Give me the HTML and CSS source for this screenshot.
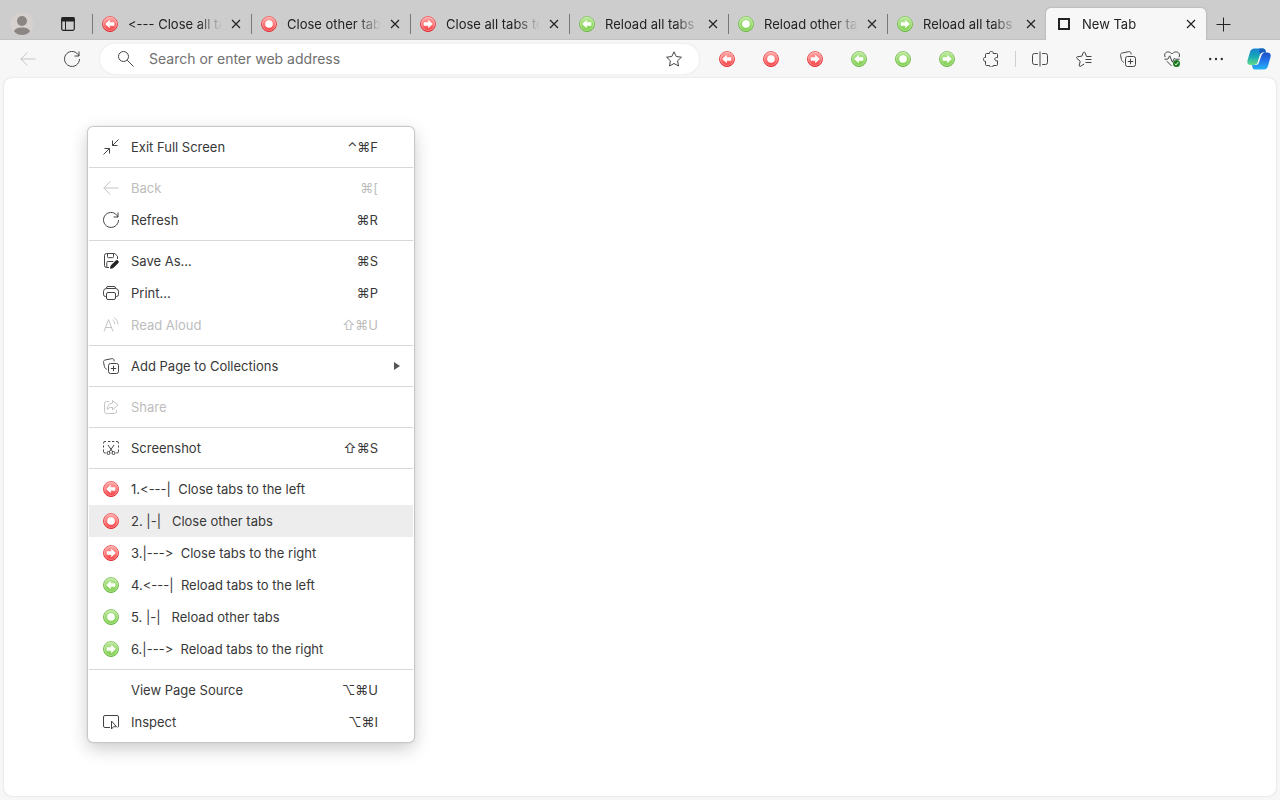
FILE: index.html
```html
<!DOCTYPE html>
<html lang="en">
<head>
<meta charset="utf-8">
<title>New Tab</title>
<link rel="stylesheet" href="styles.css">
</head>
<body>
<svg class="sprite" aria-hidden="true">
  <defs>
    <linearGradient id="red" x1="0" y1="0" x2="0" y2="1"><stop offset="0" stop-color="#ffaaaa"/><stop offset=".5" stop-color="#f77"/><stop offset="1" stop-color="#f43c42"/></linearGradient>
    <linearGradient id="redrim" x1="0" y1="0" x2="0" y2="1"><stop offset="0" stop-color="#ee6b6b"/><stop offset="1" stop-color="#dd2730"/></linearGradient>
    <linearGradient id="green" x1="0" y1="0" x2="0" y2="1"><stop offset="0" stop-color="#bdea9f"/><stop offset=".5" stop-color="#9ada70"/><stop offset="1" stop-color="#80d04e"/></linearGradient>
    <linearGradient id="greenrim" x1="0" y1="0" x2="0" y2="1"><stop offset="0" stop-color="#8fc96a"/><stop offset="1" stop-color="#63b53a"/></linearGradient>
    <linearGradient id="cpa" x1="0" y1="0" x2="0" y2="1"><stop offset="0" stop-color="#1682d4"/><stop offset=".5" stop-color="#18a9b5"/><stop offset="1" stop-color="#5fdc8a"/></linearGradient>
    <linearGradient id="cpb" x1="0" y1="0" x2="0" y2="1"><stop offset="0" stop-color="#1b4fc4"/><stop offset=".5" stop-color="#2377ec"/><stop offset="1" stop-color="#22b4f5"/></linearGradient>
    <symbol id="arrow" viewBox="0 0 16 16"><path d="M3.200 8 7.800 3.800V6.300H12.300V9.700H7.800V12.200Z" fill="#fff" stroke="none"/></symbol>
    <symbol id="dot" viewBox="0 0 16 16"><circle cx="8" cy="8" r="3.800" fill="#fff" stroke="none"/></symbol>
    <symbol id="red-ball" viewBox="0 0 16 16"><circle cx="8" cy="8" r="7.500" fill="url(#red)" stroke="url(#redrim)"/><circle cx="8" cy="8" r="6.500" fill="none" stroke="#fff" stroke-opacity=".3"/></symbol>
    <symbol id="green-ball" viewBox="0 0 16 16"><circle cx="8" cy="8" r="7.500" fill="url(#green)" stroke="url(#greenrim)"/><circle cx="8" cy="8" r="6.500" fill="none" stroke="#fff" stroke-opacity=".3"/></symbol>
    <symbol id="red-left" viewBox="0 0 16 16"><use href="#red-ball"/><use href="#arrow"/></symbol>
    <symbol id="red-dot" viewBox="0 0 16 16"><use href="#red-ball"/><use href="#dot"/></symbol>
    <symbol id="red-right" viewBox="0 0 16 16"><use href="#red-ball"/><use href="#arrow" transform="matrix(-1 0 0 1 16 0)"/></symbol>
    <symbol id="green-left" viewBox="0 0 16 16"><use href="#green-ball"/><use href="#arrow"/></symbol>
    <symbol id="green-dot" viewBox="0 0 16 16"><use href="#green-ball"/><use href="#dot"/></symbol>
    <symbol id="green-right" viewBox="0 0 16 16"><use href="#green-ball"/><use href="#arrow" transform="matrix(-1 0 0 1 16 0)"/></symbol>
    <symbol id="close" viewBox="0 0 16 16"><path d="M4 4l8 8M12 4l-8 8" stroke-width="1.200"/></symbol>
    <symbol id="back" viewBox="0 0 16 16"><path d="M15.500 8H.800M7.500 1.300.800 8l6.700 6.700"/></symbol>
    <symbol id="refresh" viewBox="0 0 16 16"><path d="M14.900 5A7.500 7.500 0 1 0 15.500 8M15 .500V5H10.500"/></symbol>
    <symbol id="collections" viewBox="0 0 16 16"><rect x="5.500" y="5.500" width="10" height="10" rx="2"/><path d="M10.500 7.800v5.400M7.800 10.500h5.400M3.800 11.400 2.600 10.500C1.800 9.900 1.600 9.300 1.400 8.500L.600 4.500C.300 3 .900 2.300 2.300 2L8.500.700C10 .400 10.800 1 11 2.300L11.200 3.400"/></symbol>
  </defs>
</svg>

<header>
  <div class="tab-strip">
    <button class="profile" aria-label="Profile"><svg width="24" height="24" viewBox="0 0 24 24"><circle cx="12" cy="12" r="11.500" fill="#d6d1ce"/><circle cx="12" cy="9" r="5" fill="#8b8683"/><path d="M4 19.500c1-3 3.500-4 8-4s7 1 8 4c-2 2.500-5 3.500-8 3.500s-6-1-8-3.500z" fill="#8b8683"/></svg></button>
    <button class="tab-actions" aria-label="Tab actions"><svg class="icon dark" viewBox="0 0 16 16"><rect x="1.700" y="1.700" width="12.600" height="12.600" rx="1.500" stroke-width="1.200"/><path d="M1.500 3.500h13" stroke-width="4"/><path d="M5.500 5v9"/></svg></button>
    <nav class="tabs" aria-label="Tabs">
      <div class="tab"><svg class="icon"><use href="#red-left"/></svg><span class="title">&lt;--- Close all tabs</span><button aria-label="Close tab"><svg class="icon dark"><use href="#close"/></svg></button></div>
      <div class="tab"><svg class="icon"><use href="#red-dot"/></svg><span class="title">Close other tabs</span><button aria-label="Close tab"><svg class="icon dark"><use href="#close"/></svg></button></div>
      <div class="tab"><svg class="icon"><use href="#red-right"/></svg><span class="title">Close all tabs to</span><button aria-label="Close tab"><svg class="icon dark"><use href="#close"/></svg></button></div>
      <div class="tab"><svg class="icon"><use href="#green-left"/></svg><span class="title">Reload all tabs to</span><button aria-label="Close tab"><svg class="icon dark"><use href="#close"/></svg></button></div>
      <div class="tab"><svg class="icon"><use href="#green-dot"/></svg><span class="title">Reload other tabs</span><button aria-label="Close tab"><svg class="icon dark"><use href="#close"/></svg></button></div>
      <div class="tab"><svg class="icon"><use href="#green-right"/></svg><span class="title">Reload all tabs to</span><button aria-label="Close tab"><svg class="icon dark"><use href="#close"/></svg></button></div>
      <div class="tab active"><svg class="icon dark" viewBox="0 0 16 16"><rect x="3" y="3" width="10" height="10" stroke-width="2"/></svg><span class="title">New Tab</span><button aria-label="Close tab"><svg class="icon dark"><use href="#close"/></svg></button></div>
    </nav>
    <button class="new-tab" aria-label="New tab"><svg class="icon dark" viewBox="0 0 16 16"><path d="M8.500 1.500v14M1.500 8.500h14"/></svg></button>
  </div>

  <div class="toolbar">
    <div class="navigation">
      <button class="disabled" disabled aria-label="Back"><svg class="icon"><use href="#back"/></svg></button>
      <button aria-label="Refresh"><svg class="icon"><use href="#refresh"/></svg></button>
    </div>
    <form class="address">
      <svg class="icon" viewBox="0 0 16 16"><circle cx="5.500" cy="5.500" r="5"/><path d="m9.200 9.200 6.300 6.300"/></svg>
      <input type="text" aria-label="Address" placeholder="Search or enter web address">
      <button type="button" aria-label="Add to favorites"><svg class="icon" viewBox="0 0 16 16"><path d="m8 .800 2.200 4.700 5.200.700-3.800 3.600.900 5.200L8 12.500 3.500 15l.900-5.200L.600 6.200l5.200-.700z"/></svg></button>
    </form>
    <div class="actions">
      <button aria-label="Close tabs to the left"><svg class="icon"><use href="#red-left"/></svg></button>
      <button aria-label="Close other tabs"><svg class="icon"><use href="#red-dot"/></svg></button>
      <button aria-label="Close tabs to the right"><svg class="icon"><use href="#red-right"/></svg></button>
      <button aria-label="Reload tabs to the left"><svg class="icon"><use href="#green-left"/></svg></button>
      <button aria-label="Reload other tabs"><svg class="icon"><use href="#green-dot"/></svg></button>
      <button aria-label="Reload tabs to the right"><svg class="icon"><use href="#green-right"/></svg></button>
      <button aria-label="Extensions"><svg class="icon" viewBox="0 0 16 16"><path d="M3.500 2.500h3C6.200.900 7 .500 8.300.500s2.200.500 1.900 2h3.300q1 0 1 1v3.200c-1.800-.400-2.700.200-2.700 1.500s.9 1.900 2.700 1.500v3.800q0 1-1 1h-3.300c.300 1.200-.600 1.500-1.900 1.500s-2-.400-1.800-1.500h-3q-1 0-1-1v-3.300C1 10.500.500 9.600.500 8.300S1 6.200 2.500 6.500v-3q0-1 1-1z"/></svg></button>
      <span class="divider"></span>
      <button aria-label="Split screen"><svg class="icon" viewBox="0 0 16 16"><path d="M5.800 2.500H2.500q-2 0-2 2v7q0 2 2 2h3.300M10.200 2.500h3.300q2 0 2 2v7q0 2-2 2h-3.300M8 .500v15"/></svg></button>
      <button aria-label="Favorites"><svg class="icon" viewBox="0 0 16 16"><path d="M15.500 5.500h-5L9.200 2C8.700.700 7.600.700 7.100 2L5.800 5.200l-4.200.500C.400 5.900.200 6.800 1 7.500l3.200 2.800-.9 3.800c-.300 1.200.5 1.600 1.400 1.100L8.200 13M9.500 8.500h6M9.500 11.500h6"/></svg></button>
      <button aria-label="Collections"><svg class="icon"><use href="#collections"/></svg></button>
      <button aria-label="Browser essentials"><svg class="icon" viewBox="0 0 16 16"><path d="M1.200 6.200C-.500 2.800 2 .800 4.200.900 6 1 7 2 8 3c1-1 2-2 3.800-2.100 2.500-.100 4.700 2 3.200 5.300M.500 8.200h3.300L5.700 4.800l2.700 6.400 2-4 1 1h4.200M2.800 10.200l4.700 4.700"/><circle cx="12.500" cy="12.500" r="3.500" fill="#197a20" stroke="none"/><path d="m10.800 12.700 1.200 1.200 2.300-2.800" stroke="#fff"/></svg></button>
      <button aria-label="Settings and more"><svg class="icon" viewBox="0 0 16 16"><g fill="#333" stroke="none"><circle cx="2.200" cy="8" r="1.200"/><circle cx="8" cy="8" r="1.200"/><circle cx="13.800" cy="8" r="1.200"/></g></svg></button>
      <button class="copilot" aria-label="Copilot"><svg width="24" height="22" viewBox="0 0 24 22"><path d="M7.500.500H16q1.800 0 2.300 1.500L19 4.500h-3.500q-1.700 0-2.300 2L10.500 15q-.900 2-3 2H4Q-.500 17 .500 12.500L3 4Q4 .500 7.500.500z" fill="url(#cpa)"/><path d="M12.500.500H16q1.800 0 2.300 1.500L19 4.500h-3.500q-1.700 0-2.300 2Q11.500 4 12.500.500z" fill="#1560bd"/><path d="M16.500 21.500H8q-1.800 0-2.300-1.500L5 17h3.500q1.700 0 2.300-2L13.500 7q.9-2.500 3-2.500H20q4.500 0 3.500 4.500L21 18q-1 3.500-4.500 3.500z" fill="url(#cpb)"/><path d="M12.800 7.500q.9-3 3.200-3h1.500q-2.200.4-3 2.800L12 14.500q-.800 2.500-3.300 2.500H7.500Q10 16.800 10.700 14.500z" fill="#f7f7f7"/></svg></button>
    </div>
  </div>
</header>

<main></main>

<div class="menu" role="menu">
  <button role="menuitem"><svg class="icon" viewBox="0 0 16 16"><path d="M15.500.500 9.500 6.500M9.500 1.500v5h5M.500 15.500l6-6M1.500 9.500h5v5"/></svg><span class="label">Exit Full Screen</span><kbd>⌃⌘F</kbd></button>
  <hr>
  <button role="menuitem" disabled><svg class="icon"><use href="#back"/></svg><span class="label">Back</span><kbd>⌘[</kbd></button>
  <button role="menuitem"><svg class="icon"><use href="#refresh"/></svg><span class="label">Refresh</span><kbd>⌘R</kbd></button>
  <hr>
  <button role="menuitem"><svg class="icon" viewBox="0 0 16 16"><path d="M6 14.500H3.500q-2 0-2-2v-10q0-2 2-2h8.300l2.700 2.700V6M4.500.700v3q0 1 1 1h4q1 0 1-1v-3M3.800 14.300V9.500q0-1 1-1h5.500"/><path d="M7.500 15.300 8.200 12.500 13 7.800q1-.8 1.900.1t.1 1.900l-4.800 4.800z" fill="#222" stroke="#222"/></svg><span class="label">Save As…</span><kbd>⌘S</kbd></button>
  <button role="menuitem"><svg class="icon" viewBox="0 0 16 16"><path d="M3.500 11.500h-1q-2 0-2-2v-3q0-3 3-3h9q3 0 3 3v3q0 2-2 2h-1M3.500 3.500v-.500q0-1.500 1.500-1.500h6q1.500 0 1.500 1.500v.500"/><rect x="3.500" y="7.500" width="9" height="7" rx="1.500"/></svg><span class="label">Print…</span><kbd>⌘P</kbd></button>
  <button role="menuitem" disabled><svg class="icon" viewBox="0 0 16 16"><path d="M1 14.500 5.500 2.500 10 14.500M2.600 10.500h5.800M9.500 3q2.200 1.200 2.300 4M11 .500q4 2.500 4.200 7"/></svg><span class="label">Read Aloud</span><kbd>⇧⌘U</kbd></button>
  <hr>
  <button role="menuitem" aria-haspopup="menu"><svg class="icon"><use href="#collections"/></svg><span class="label">Add Page to Collections</span><svg class="submenu" width="6" height="8" viewBox="0 0 6 8"><path d="M0 0 6 4 0 8z"/></svg></button>
  <hr>
  <button role="menuitem" disabled><svg class="icon" viewBox="0 0 16 16"><path d="M6 2.500H3.500q-2 0-2 2v8q0 2 2 2h8q2 0 2-2V11M9.500 1.500l5.500 4.700-5.500 4.600V8.300Q6 8 4 10.500 4.500 4.500 9.500 4.200z"/></svg><span class="label">Share</span></button>
  <hr>
  <button role="menuitem"><svg class="icon" viewBox="0 0 16 16"><path d="M.500 3.500V3Q.500 1.500 2 1.500h1M5 1.500h2.300M9 1.500h2.300M13 1.500h1q1.500 0 1.500 1.500v.5M.500 5.500v2M.500 9.500v2q0 1.500 1.500 1.500h.700M15.500 5.500v2M15.500 9.500v2q0 1.500-1.500 1.500h-.700M5 5l4.800 7M11 5l-4.800 7"/><circle cx="5.500" cy="13" r="1.500"/><circle cx="10.500" cy="13" r="1.500"/></svg><span class="label">Screenshot</span><kbd>⇧⌘S</kbd></button>
  <hr>
  <button role="menuitem"><svg class="icon"><use href="#red-left"/></svg><span class="label">1.&lt;---|  Close tabs to the left</span></button>
  <button role="menuitem" class="hover"><svg class="icon"><use href="#red-dot"/></svg><span class="label">2. |-|   Close other tabs</span></button>
  <button role="menuitem"><svg class="icon"><use href="#red-right"/></svg><span class="label">3.|---&gt;  Close tabs to the right</span></button>
  <button role="menuitem"><svg class="icon"><use href="#green-left"/></svg><span class="label">4.&lt;---|  Reload tabs to the left</span></button>
  <button role="menuitem"><svg class="icon"><use href="#green-dot"/></svg><span class="label">5. |-|   Reload other tabs</span></button>
  <button role="menuitem"><svg class="icon"><use href="#green-right"/></svg><span class="label">6.|---&gt;  Reload tabs to the right</span></button>
  <hr>
  <button role="menuitem"><span class="icon"></span><span class="label">View Page Source</span><kbd>⌥⌘U</kbd></button>
  <button role="menuitem"><svg class="icon" viewBox="0 0 16 16"><path d="M7 13.500H2q-1.500 0-1.500-1.500V3Q.500 1.500 2 1.500h12q1.500 0 1.500 1.500v9q0 1-.800 1.500M8.500 7v8l2-2.300h3z"/></svg><span class="label">Inspect</span><kbd>⌥⌘I</kbd></button>
</div>
</body>
</html>
```
FILE: styles.css
```css
* {
  box-sizing: border-box;
}

body {
  margin: 0;
  min-height: 100vh;
  display: flex;
  flex-direction: column;
  background: #f7f7f7;
  color: #383838;
  font: 13px/16px Inter, "DejaVu Sans", sans-serif;
  font-feature-settings: "calt" 0;
}

button,
input,
kbd {
  font: inherit;
  font-feature-settings: inherit;
  color: inherit;
}

button {
  display: flex;
  align-items: center;
  justify-content: center;
  border: 0;
  padding: 0;
  background: none;
}

.sprite {
  position: absolute;
  width: 0;
  height: 0;
}

.icon {
  flex: none;
  width: 16px;
  height: 16px;
  fill: none;
  stroke: #444;
}

.dark {
  stroke: #222;
}

.tab-strip {
  display: flex;
  align-items: flex-end;
  height: 40px;
  padding-top: 8px;
  background: #cdcdcd;
  box-shadow: inset 0 -1px #c2c2c2;
}

.tab-strip > button {
  flex: none;
  height: 32px;
}

.profile {
  width: 44px;
}

.tab-actions {
  width: 48px;
}

.tabs {
  display: flex;
  flex: 0 1 1114px;
  min-width: 0;
}

.tab {
  display: flex;
  align-items: center;
  flex: 0 1 159px;
  min-width: 0;
  height: 32px;
  padding: 0 1px 0 10px;
  color: #222;
  background: linear-gradient(#777, #777) 0 50% / 1px 20px no-repeat;
}

.tab.active {
  flex-basis: 160px;
  background: #f7f7f7;
  border-radius: 5px 5px 0 0;
  box-shadow: 0 0 2px #999;
  clip-path: inset(-3px -3px 0);
}

.title {
  flex: 1;
  min-width: 0;
  margin-left: 10px;
  overflow: hidden;
  white-space: nowrap;
  mask-image: linear-gradient(to left, transparent, #000 24px);
}

.tab button {
  flex: none;
  width: 28px;
  height: 24px;
}

.new-tab {
  width: 34px;
}

.toolbar {
  display: flex;
  align-items: center;
  height: 38px;
}

.navigation {
  display: flex;
  padding: 0 6px;
}

.navigation button,
.actions button {
  width: 44px;
  height: 32px;
}

.disabled .icon {
  stroke: #c4c4c4;
}

.address {
  flex: 1;
  display: flex;
  align-items: center;
  height: 30px;
  padding: 0 17px 0 18px;
  background: #fff;
  border-radius: 15px;
  box-shadow: 0 0 3px #e4e4e4;
}

.address input {
  flex: 1;
  min-width: 0;
  margin-left: 15px;
  padding: 0;
  border: 0;
  outline: 0;
  background: none;
  font-size: 14px;
}

.address input::placeholder {
  color: #707070;
  opacity: 1;
}

.actions {
  display: flex;
  align-items: center;
  padding-left: 6px;
}

.divider {
  width: 1px;
  height: 16px;
  margin: 0 2px;
  background: #d0d0d0;
}

.actions .copilot {
  width: 42px;
}

main {
  flex: 1;
  margin: 0 4px 4px;
  background: #fff;
  border-radius: 8px;
  box-shadow: 0 0 2px #ccc;
}

.menu {
  position: absolute;
  left: 88px;
  top: 127px;
  width: 326px;
  padding: 4px 1px;
  background: #fff;
  border-radius: 5px;
  box-shadow: 0 0 1px 1px #c4c4c4, 0 6px 18px rgba(0, 0, 0, .22);
}

.menu hr {
  height: 1px;
  margin: 4px 0;
  border: 0;
  background: #d8d8d8;
}

.menu button {
  width: 100%;
  height: 32px;
  padding: 0 35px 0 14px;
}

.menu .hover {
  background: #ededed;
}

.menu button:disabled {
  color: #bdbdbd;
}

.menu button:disabled .icon {
  stroke: #c4c4c4;
}

.label {
  flex: 1;
  margin-left: 12px;
  text-align: left;
  white-space: pre;
}

.menu button[aria-haspopup] {
  padding-right: 13px;
}

.submenu {
  fill: #555;
}
```
